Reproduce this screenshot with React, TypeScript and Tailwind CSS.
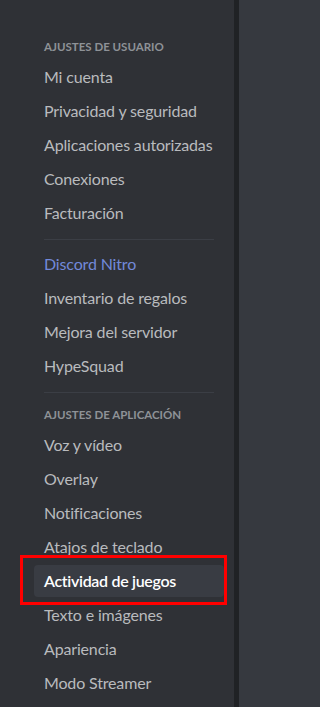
const USER_ITEMS = ["Mi cuenta", "Privacidad y seguridad", "Aplicaciones autorizadas", "Conexiones", "Facturación"];
const NITRO_ITEMS = ["Inventario de regalos", "Mejora del servidor", "HypeSquad"];
const APP_ITEMS = [
  "Voz y vídeo",
  "Overlay",
  "Notificaciones",
  "Atajos de teclado",
  "Actividad de juegos",
  "Texto e imágenes",
  "Apariencia",
  "Modo Streamer",
];
const SELECTED = "Actividad de juegos";

function Header({ children }: { children: string }) {
  return (
    <div className="px-[10px] py-[6px] text-[11.5px] leading-4 font-bold uppercase text-[#8e9297]">
      {children}
    </div>
  );
}

function Item({ label, className = "" }: { label: string; className?: string }) {
  const selected = label === SELECTED;
  return (
    <div className="relative mb-[2px]">
      {selected && (
        <div className="absolute -left-[14px] -right-[3px] -top-[10px] -bottom-[8px] border-[3px] border-[#ff0000]" />
      )}
      <div
        className={
          "relative h-8 px-[10px] flex items-center rounded-[4px] text-[16px] leading-5 whitespace-nowrap " +
          (selected
            ? "bg-[#393c43] text-white font-semibold tracking-[-0.02em]"
            : "text-[#b9bbbe] tracking-[-0.01em]") +
          " " +
          className
        }
      >
        {label}
      </div>
    </div>
  );
}

function Divider() {
  return <div className="h-px bg-[#3b3e45] mx-[10px] my-2" />;
}

export default function App() {
  return (
    <div
      className="flex h-[707px] w-full min-w-[279px] overflow-hidden bg-[#36393f]"
      style={{ fontFamily: "Lato, 'Noto Sans', sans-serif" }}
    >
      <nav className="w-[234px] shrink-0 flex flex-col bg-[#2f3136] pt-[33px] pl-[34px] pr-[10px]">
        <Header>Ajustes de usuario</Header>
        {USER_ITEMS.map((l) => (
          <Item key={l} label={l} />
        ))}
        <Divider />
        <Item label="Discord Nitro" className="!text-[#7289da]" />
        {NITRO_ITEMS.map((l) => (
          <Item key={l} label={l} />
        ))}
        <Divider />
        <Header>Ajustes de aplicación</Header>
        {APP_ITEMS.map((l) => (
          <Item key={l} label={l} />
        ))}
      </nav>
      <div className="w-[5px] shrink-0 bg-[#202225]" />
      <main className="flex-1 bg-[#36393f]" />
    </div>
  );
}
